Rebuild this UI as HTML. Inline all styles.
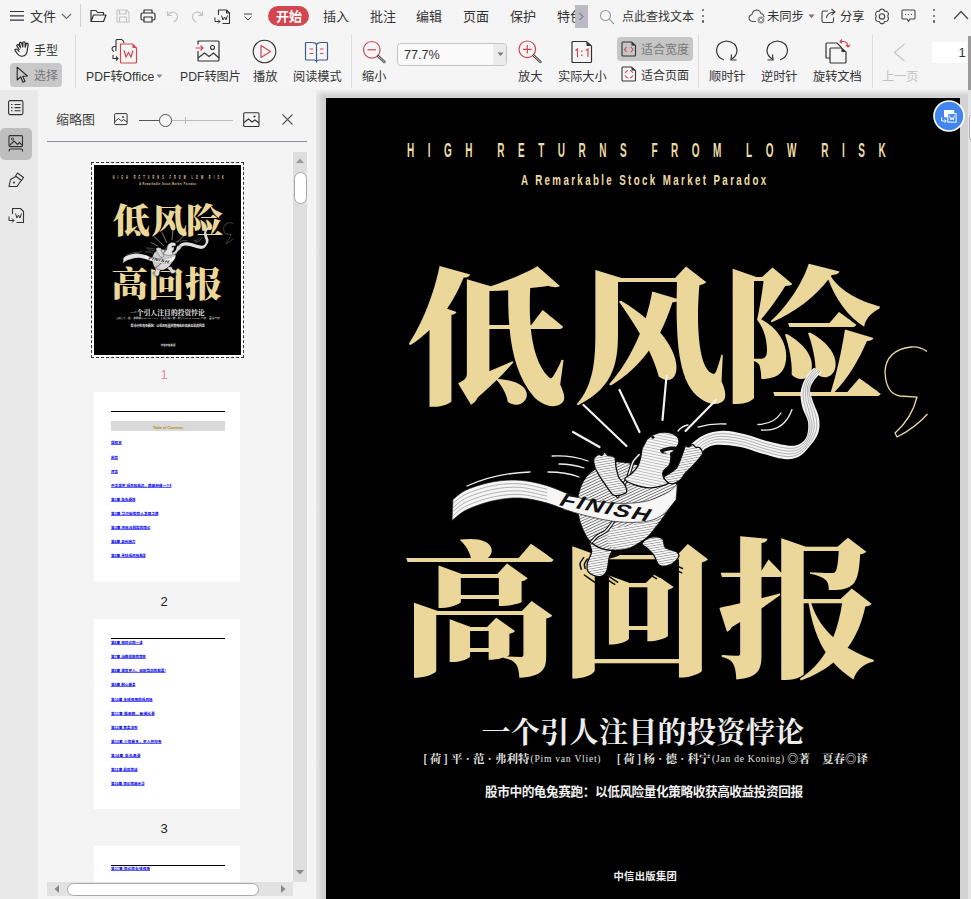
<!DOCTYPE html>
<html lang="zh-CN">
<head>
<meta charset="utf-8">
<title>WPS PDF</title>
<style>
*{box-sizing:border-box;margin:0;padding:0}
html,body{width:971px;height:899px;overflow:hidden;background:#f5f5f5;font-family:"Liberation Sans","Noto Sans CJK SC",sans-serif;color:#333}
.abs{position:absolute}
#app{position:relative;width:971px;height:899px;overflow:hidden}
/* ===== menu row ===== */
#menubar{left:0;top:0;width:971px;height:32px;background:#f5f5f5}
.mi{position:absolute;top:7px;height:20px;line-height:20px;font-size:13px;color:#333;white-space:nowrap}
/* ===== toolbar ===== */
#toolbar{left:0;top:32px;width:971px;height:58px;background:#f5f5f5}
.tl{position:absolute;font-size:12.2px;line-height:16px;color:#333;white-space:nowrap}
.vsep{position:absolute;width:1px;background:#dcdcdc}
/* ===== left strip ===== */
#strip{left:0;top:90px;width:38px;height:809px;background:#e9e9e9}
#panel{left:38px;top:90px;width:269px;height:809px;background:#f4f4f4}
#gap{left:307px;top:90px;width:9px;height:809px;background:#f4f4f4}
#doc{left:316px;top:90px;width:655px;height:809px;background:#d2d2d2;overflow:hidden}
.cream{color:#ebd79a}
#docin{left:-316px;top:-90px;width:971px;height:899px}
#page{left:326px;top:98px;width:634px;height:830px;background:#000}
.big{position:absolute;transform-origin:0 0;font-family:"Noto Serif CJK SC","Liberation Serif",serif;font-weight:900;color:#ebd79a;font-size:158px;line-height:158px;height:158px;white-space:nowrap}
.eng1{position:absolute;color:#eddca6;font-weight:700;font-family:"Liberation Sans",sans-serif;white-space:nowrap;transform-origin:0 0}
.sub{position:absolute;font-family:"Noto Serif CJK SC","Liberation Serif",serif;font-weight:700;color:#ededed;white-space:nowrap}
.a{top:750px;font-size:11.5px;line-height:16px;color:#e4e4e4}
.a i{font-style:normal;display:inline-block;width:10.5px;text-align:center}
.lat{font-family:"Liberation Serif","Noto Serif CJK SC",serif;font-weight:400;font-size:9.6px;letter-spacing:.75px;top:751px}
.sans{position:absolute;font-family:"Liberation Sans","Noto Sans CJK SC",sans-serif;font-weight:700;color:#f0f0f0;white-space:nowrap}


.dots{width:3px;height:15px}
.dots b{display:block;width:2.4px;height:2.4px;border-radius:50%;background:#5a5a5a;margin:0 0 3.2px 0}
.tn{left:76px;width:100px;text-align:center;font-size:13px;line-height:16px;color:#222}
.tp{left:56px;width:146px;background:#fff;overflow:hidden}
.tline{position:absolute;left:17px;width:114px;height:1px;background:#000}
.ttoc{position:absolute;left:17px;width:380px;text-align:center;transform-origin:0 0;transform:scale(.3);font-size:12px;line-height:16px;font-weight:700;color:#b8860b;white-space:nowrap}
.tlk{position:absolute;left:17px;transform-origin:0 0;transform:scale(.3);font-size:12px;line-height:16px;height:16px;font-weight:700;color:#0000ee;white-space:nowrap}
.tlk span{display:inline-block;overflow:hidden;text-decoration:underline;text-decoration-thickness:3.2px;text-underline-offset:1px;text-align:justify;text-align-last:justify;height:16px}
</style>
</head>
<body>
<div id="app">
<div id="menubar" class="abs">
 <svg class="abs" style="left:10px;top:10px" width="15" height="12" viewBox="0 0 15 12"><path d="M0 1.5H14M0 5.8H14M0 10.2H14" stroke="#333" stroke-width="1.2" fill="none"/></svg>
 <div class="mi" style="left:30px">文件</div>
 <svg class="abs" style="left:61px;top:13px" width="11" height="7" viewBox="0 0 11 7"><path d="M1 1L5.5 5.5L10 1" stroke="#666" stroke-width="1.1" fill="none"/></svg>
 <div class="vsep" style="left:80px;top:4px;height:23px;background:#d0d0d0"></div>
 <svg class="abs" style="left:90px;top:9px" width="17" height="14" viewBox="0 0 17 14"><path d="M1 12.5V1.5H6L7.5 3.5H13.5V6M1 12.5L3.5 6H16L13.5 12.5Z" stroke="#333" stroke-width="1.2" fill="none" stroke-linejoin="round"/></svg>
 <svg class="abs" style="left:116px;top:9px" width="14" height="14" viewBox="0 0 14 14"><path d="M1 1H10.5L13 3.5V13H1ZM3.5 1V5H10V1M3.5 13V8H10.5V13" stroke="#c2c2c2" stroke-width="1.1" fill="none" stroke-linejoin="round"/></svg>
 <svg class="abs" style="left:140px;top:9px" width="16" height="14" viewBox="0 0 16 14"><path d="M4 4V1H12V4M4 11H2.5Q1 11 1 9.5V5.5Q1 4 2.5 4H13.5Q15 4 15 5.5V9.5Q15 11 13.5 11H12M4 8H12V13H4Z" stroke="#333" stroke-width="1.2" fill="none" stroke-linejoin="round"/></svg>
 <svg class="abs" style="left:166px;top:10px" width="13" height="13" viewBox="0 0 13 13"><path d="M1.5 1.5V5.5H5.5M1.8 5.3Q4 1.8 7.5 2.2Q11.5 3 11.5 7Q11.3 10 8 12" stroke="#c2c2c2" stroke-width="1.1" fill="none" stroke-linecap="round"/></svg>
 <svg class="abs" style="left:191px;top:10px" width="13" height="13" viewBox="0 0 13 13"><path d="M11.5 1.5V5.5H7.5M11.2 5.3Q9 1.8 5.5 2.2Q1.5 3 1.5 7Q1.7 10 5 12" stroke="#c2c2c2" stroke-width="1.1" fill="none" stroke-linecap="round"/></svg>
 <svg class="abs" style="left:214px;top:9px" width="17" height="16" viewBox="0 0 17 16"><path d="M4.5 6V1H12.5L15.5 4V14.5H8.5M12.5 1V4H15.5" stroke="#333" stroke-width="1.1" fill="none" stroke-linejoin="round"/><path d="M7.5 6.5L9 11L10.5 8L12 11L13.5 6.5" stroke="#333" stroke-width="1" fill="none"/><path d="M1 8.5V12.5H6M4 10.5L6 12.5L4 14.5" stroke="#333" stroke-width="1" fill="none"/></svg>
 <svg class="abs" style="left:243px;top:13px" width="10" height="8" viewBox="0 0 10 8"><path d="M1 1H9M1.5 3.5L5 7L8.5 3.5" stroke="#444" stroke-width="1" fill="none"/></svg>
 <div class="abs" style="left:268px;top:6px;width:41px;height:20px;border-radius:10px;background:#d2464f"></div>
 <div class="mi" style="left:276px;color:#fff;font-weight:700">开始</div>
 <div class="mi" style="left:323px">插入</div>
 <div class="mi" style="left:370px">批注</div>
 <div class="mi" style="left:416px">编辑</div>
 <div class="mi" style="left:463px">页面</div>
 <div class="mi" style="left:510px">保护</div>
 <div class="mi" style="left:557px;width:18px;overflow:hidden">特色</div>
 <div class="abs" style="left:575px;top:5px;width:13px;height:23px;background:#b9bcc4"></div>
 <svg class="abs" style="left:578px;top:12px" width="7" height="9" viewBox="0 0 7 9"><path d="M1.5 1L5 4.5L1.5 8" stroke="#555" stroke-width="1" fill="none"/></svg>
 <svg class="abs" style="left:599px;top:9px" width="16" height="16" viewBox="0 0 16 16"><circle cx="6.5" cy="6.5" r="5" stroke="#999" stroke-width="1.1" fill="none"/><path d="M10.2 10.2L15 15" stroke="#999" stroke-width="1.1"/></svg>
 <div class="mi" style="left:622px;font-size:12px">点此查找文本</div>
 <div class="abs dots" style="left:702px;top:9px"><b></b><b></b><b></b></div>
 <svg class="abs" style="left:748px;top:8px" width="18" height="16" viewBox="0 0 18 16"><path d="M8 13.5H4.5Q1 13 1 9.8Q1.2 7 4 6.5Q4.5 2.5 8.5 2Q12 2.2 13 5.5Q16 6 16 9" stroke="#555" stroke-width="1.1" fill="none"/><circle cx="13" cy="12" r="3.5" fill="#9a9a9a"/><path d="M11.6 10.6L14.4 13.4M14.4 10.6L11.6 13.4" stroke="#fff" stroke-width="1"/></svg>
 <div class="mi" style="left:767px;font-size:12.3px">未同步</div>
 <svg class="abs" style="left:808px;top:14px" width="7" height="5" viewBox="0 0 7 5"><path d="M0.5 0.5H6.5L3.5 4.2Z" fill="#777"/></svg>
 <svg class="abs" style="left:821px;top:8px" width="16" height="16" viewBox="0 0 16 16"><path d="M7 3H2.5Q1 3 1 4.5V13Q1 14.5 2.5 14.5H11Q12.5 14.5 12.5 13V9.5" stroke="#444" stroke-width="1.1" fill="none"/><path d="M5.5 10Q6 4.5 13.5 4M10.5 1L14 4L10.5 7" stroke="#444" stroke-width="1.1" fill="none"/></svg>
 <div class="mi" style="left:840px;font-size:12.3px">分享</div>
 <svg class="abs" style="left:874px;top:8px" width="16" height="17" viewBox="0 0 16 17"><path d="M6.300 1.600Q8 0.700 9.700 1.600L10.600 3.100L12.900 3.400Q14.500 4.500 14.500 6.300L13.700 7.800L14.500 10.300Q14.500 12.200 12.900 13.300L10.600 13.500L9.700 15.200Q8 16.100 6.300 15.200L5.400 13.500L3.100 13.300Q1.500 12.200 1.500 10.300L2.300 8.400L1.500 6.300Q1.500 4.500 3.100 3.400L5.400 3.100Z" stroke="#444" stroke-width="1.100" fill="none" stroke-linejoin="round"/><circle cx="8" cy="8.400" r="2.700" stroke="#444" stroke-width="1.100" fill="none"/></svg>
 <svg class="abs" style="left:901px;top:9px" width="15" height="14" viewBox="0 0 15 14"><path d="M2 1H13Q14 1 14 2V9Q14 10 13 10H9L7.5 12.5L6 10H2Q1 10 1 9V2Q1 1 2 1Z" stroke="#444" stroke-width="1.1" fill="none"/><path d="M4 5.5H5M7 5.5H8M10 5.5H11" stroke="#444" stroke-width="1.2"/></svg>
 <div class="abs dots" style="left:933px;top:9px"><b></b><b></b><b></b></div>
 <svg class="abs" style="left:953px;top:10px" width="16" height="10" viewBox="0 0 16 10"><path d="M1 9L8 1.5L15 9" stroke="#444" stroke-width="1.2" fill="none"/></svg>
</div>
<div id="toolbar" class="abs">
 <!-- coordinates inside toolbar are screen coords minus 32 in y -->
 <svg class="abs" style="left:14px;top:9px" width="17" height="16" viewBox="0 0 17 16"><path d="M5.2 8.5L3.2 5.6Q2.4 4.4 3.4 3.8Q4.4 3.4 5.1 4.5L6.6 6.8L5.6 3Q5.3 1.7 6.4 1.4Q7.5 1.2 7.9 2.5L8.8 6L8.8 1.9Q8.9 0.7 10 0.7Q11.1 0.8 11.1 2L11.2 6.2L12.1 3Q12.5 1.9 13.5 2.2Q14.4 2.6 14.2 3.8L13.4 8Q13.4 11.5 11.8 13.6Q10.2 15.4 7.6 15.2Q5.2 15 3.6 13L1.3 9.9Q0.6 8.8 1.5 8.2Q2.5 7.7 3.4 8.7L5 10.4" stroke="#222" stroke-width="1.15" fill="none" stroke-linejoin="round" stroke-linecap="round"/></svg>
 <div class="tl" style="left:34px;top:10.6px;font-size:12px">手型</div>
 <div class="abs" style="left:10px;top:31px;width:52px;height:24px;border-radius:4px;background:#c9c9c9"></div>
 <svg class="abs" style="left:16px;top:34px" width="13" height="18" viewBox="0 0 13 18"><path d="M1.2 1.2V14L4.6 10.8L7 16.2L9 15.3L6.7 10.2L11.4 10Z" stroke="#222" stroke-width="1.1" fill="none" stroke-linejoin="round"/></svg>
 <div class="tl" style="left:34px;top:36px;font-size:12px;color:#777">选择</div>
 <div class="vsep" style="left:75px;top:3px;height:53px"></div>
 <!-- PDF to Office -->
 <svg class="abs" style="left:110px;top:6px" width="28" height="27" viewBox="0 0 28 27"><path d="M6 13V2.5Q6 1.5 7 1.5H11.5Q13.5 2 14 5" stroke="#333" stroke-width="1.1" fill="none"/><path d="M6 8.5H4Q2 9 2 11Q2.2 13 4 13.5M3 17V20.5H8M6 18.5L8 20.5L6 22.5" stroke="#333" stroke-width="1.1" fill="none"/><path d="M10.5 6H22.5L26.5 10V24Q26.5 25 25.5 25H11.5Q10.5 25 10.5 24Z" stroke="#d2464f" stroke-width="1.2" fill="#f5f5f5"/><path d="M22.5 6V10H26.5Z" fill="#d2464f"/><path d="M14 12.5L16 19L18.5 14.5L21 19L23 12.5" stroke="#d2464f" stroke-width="1.2" fill="none"/></svg>
 <div class="tl" style="left:86px;top:36.5px">PDF转Office</div>
 <svg class="abs" style="left:156px;top:41.5px" width="7" height="5" viewBox="0 0 7 5"><path d="M0.5 0.5H6.5L3.5 4Z" fill="#888"/></svg>
 <!-- PDF to image -->
 <svg class="abs" style="left:193px;top:7px" width="28" height="24" viewBox="0 0 28 24"><path d="M5 5.5V3Q5 2 6 2H25Q26 2 26 3V21Q26 22 25 22H6Q5 22 5 21V12" stroke="#333" stroke-width="1.2" fill="none"/><circle cx="19.5" cy="8.5" r="2" stroke="#333" stroke-width="1.1" fill="none"/><path d="M5 19L11.5 14L16 17.5L20.5 14L26 19" stroke="#333" stroke-width="1.2" fill="none"/><path d="M2.5 9H10M7.5 6.5L10 9L7.5 11.5" stroke="#d2464f" stroke-width="1.1" fill="none"/></svg>
 <div class="tl" style="left:180px;top:36.5px">PDF转图片</div>
 <!-- play -->
 <svg class="abs" style="left:252px;top:7px" width="25" height="25" viewBox="0 0 25 25"><circle cx="12.5" cy="12.5" r="11.3" stroke="#333" stroke-width="1.1" fill="none"/><path d="M9 6.5V18.5L18.5 12.5Z" stroke="#d2464f" stroke-width="1.2" fill="none" stroke-linejoin="round"/></svg>
 <div class="tl" style="left:253px;top:36.5px">播放</div>
 <!-- read mode -->
 <svg class="abs" style="left:304px;top:9px" width="25" height="22" viewBox="0 0 25 22"><path d="M12.5 3.5Q11.5 1.5 8 1.5H2.5Q1.5 1.5 1.5 2.5V18Q1.5 19 2.5 19H10Q12 19 12.5 20.5Q13 19 15 19H22.5Q23.500 19 23.500 18V2.500Q23.500 1.500 22.500 1.500H17Q13.500 1.500 12.500 3.500V20" stroke="#3d5a8a" stroke-width="1.2" fill="none"/><path d="M5.500 8H9M5.500 12.500H9M16 8H19.500M16 12.500H19.500" stroke="#e0454e" stroke-width="1.200"/></svg>
 <div class="tl" style="left:293px;top:36.5px">阅读模式</div>
 <div class="vsep" style="left:351px;top:3px;height:53px"></div>
 <!-- zoom out -->
 <svg class="abs" style="left:362px;top:8px" width="25" height="24" viewBox="0 0 25 24"><circle cx="9.800" cy="9.800" r="8.300" stroke="#d2464f" stroke-width="1.200" fill="none"/><path d="M5.500 9.800H14" stroke="#d2464f" stroke-width="1.200"/><path d="M16 16L22.500 22" stroke="#444" stroke-width="2.400" stroke-linecap="round"/><path d="M16 16L22.500 22" stroke="#f5f5f5" stroke-width="0.800" stroke-linecap="round"/></svg>
 <div class="tl" style="left:362px;top:36.5px">缩小</div>
 <div class="abs" style="left:397px;top:10.5px;width:110px;height:23px;border:1px solid #c6c6c6;border-radius:4px;background:#fafafa"></div>
 <div class="abs" style="left:493px;top:11.5px;width:13px;height:21px;background:#ebebeb;border-radius:0 3px 3px 0"></div>
 <svg class="abs" style="left:497px;top:20px" width="7" height="5" viewBox="0 0 7 5"><path d="M0.500 0.500H6.500L3.500 4Z" fill="#777"/></svg>
 <div class="tl" style="left:404px;top:15px;font-size:12.6px">77.7%</div>
 <!-- zoom in -->
 <svg class="abs" style="left:518px;top:8px" width="25" height="24" viewBox="0 0 25 24"><circle cx="9.300" cy="9.300" r="8.300" stroke="#d2464f" stroke-width="1.200" fill="none"/><path d="M5 9.300H13.600M9.300 5V13.600" stroke="#d2464f" stroke-width="1.200"/><path d="M15.500 15.500L22.500 22" stroke="#444" stroke-width="2.400" stroke-linecap="round"/><path d="M15.500 15.500L22.500 22" stroke="#f5f5f5" stroke-width="0.800" stroke-linecap="round"/></svg>
 <div class="tl" style="left:518px;top:36.5px">放大</div>
 <!-- actual size -->
 <svg class="abs" style="left:571px;top:8px" width="22" height="24" viewBox="0 0 22 24"><path d="M2 1.500H15.500L20.500 6V21.500Q20.500 22.500 19.500 22.500H2Q1 22.500 1 21.500V2.500Q1 1.500 2 1.500Z" stroke="#333" stroke-width="1.200" fill="none"/><path d="M15.500 1.500V6H20.500Z" fill="#333"/><path d="M4.500 10.500L6.500 9V17M15 10.500L17 9V17" stroke="#d2464f" stroke-width="1.200" fill="none"/><path d="M10.800 10.500V12M10.800 14.500V16" stroke="#d2464f" stroke-width="1.300"/></svg>
 <div class="tl" style="left:558px;top:36.5px">实际大小</div>
 <!-- fit width / page -->
 <div class="abs" style="left:617px;top:5px;width:76px;height:24px;border-radius:4px;background:#c6c6c6"></div>
 <svg class="abs" style="left:621px;top:9px" width="16" height="16" viewBox="0 0 16 16"><path d="M2 1H10.500L14.500 4.500V14Q14.500 15 13.500 15H2Q1 15 1 14V2Q1 1 2 1Z" stroke="#333" stroke-width="1.100" fill="none"/><path d="M10.500 1V4.500H14.500Z" fill="#333"/><path d="M5.500 6L3.500 8.500L5.500 11M10 6L12 8.500L10 11" stroke="#d2464f" stroke-width="1.100" fill="none"/></svg>
 <div class="tl" style="left:641px;top:9.500px;font-size:12px;color:#777">适合宽度</div>
 <svg class="abs" style="left:621px;top:34px" width="16" height="16" viewBox="0 0 16 16"><path d="M2 1H10.500L14.500 4.500V14Q14.500 15 13.500 15H2Q1 15 1 14V2Q1 1 2 1Z" stroke="#333" stroke-width="1.100" fill="none"/><path d="M10.500 1V4.500H14.500Z" fill="#333"/><path d="M4.200 7Q5 4.800 7 4.500M9 4.500Q11 5 11.800 7M11.800 9.500Q11 11.500 9 12M7 12Q5 11.500 4.200 9.500" stroke="#d2464f" stroke-width="1.100" fill="none"/></svg>
 <div class="tl" style="left:641px;top:35.500px;font-size:12px">适合页面</div>
 <div class="vsep" style="left:698px;top:3px;height:53px"></div>
 <!-- rotate cw -->
 <svg class="abs" style="left:714px;top:7px" width="25" height="24" viewBox="0 0 25 24"><path d="M17 20.500Q23 17 23 11.500Q22.500 3 12.500 2Q3 3 2.500 11.500Q3 18.500 10 20.800" stroke="#333" stroke-width="1.200" fill="none"/><path d="M17.500 15.500L17 20.800L22.500 21" stroke="#333" stroke-width="1.200" fill="none"/></svg>
 <div class="tl" style="left:709px;top:36.500px">顺时针</div>
 <svg class="abs" style="left:765px;top:7px" width="25" height="24" viewBox="0 0 25 24"><path d="M8 20.500Q2 17 2 11.500Q2.500 3 12.500 2Q22 3 22.500 11.500Q22 18.500 15 20.800" stroke="#333" stroke-width="1.200" fill="none"/><path d="M7.500 15.500L8 20.800L2.500 21" stroke="#333" stroke-width="1.200" fill="none"/></svg>
 <div class="tl" style="left:761px;top:36.500px">逆时针</div>
 <!-- rotate doc -->
 <svg class="abs" style="left:824px;top:6px" width="28" height="27" viewBox="0 0 28 27"><path d="M3 5H13L17 9V19Q17 20 16 20H3Q2 20 2 19V6Q2 5 3 5Z" stroke="#333" stroke-width="1.200" fill="#f5f5f5"/><path d="M7 10H17.500L22 14V24Q22 25 21 25H7Q6 25 6 24V11Q6 10 7 10Z" stroke="#333" stroke-width="1.200" fill="#f5f5f5"/><path d="M17.500 10V14H22Z" fill="#333"/><path d="M16 3.500H19.500Q24 4 24 9M18 1.500L16 3.500L18 5.500M22 7L24 9L26 7" stroke="#d2464f" stroke-width="1.100" fill="none"/></svg>
 <div class="tl" style="left:813px;top:36.500px">旋转文档</div>
 <div class="vsep" style="left:872px;top:3px;height:53px"></div>
 <svg class="abs" style="left:893px;top:11px" width="13" height="19" viewBox="0 0 13 19"><path d="M11.500 1L1.500 9.500L11.500 18" stroke="#c6c6c6" stroke-width="1.300" fill="none"/></svg>
 <div class="tl" style="left:882px;top:36.500px;color:#c2c2c2">上一页</div>
 <div class="abs" style="left:932px;top:10px;width:35px;height:21px;background:#fff"></div>
 <div class="tl" style="left:958.500px;top:13px;font-size:13px">1</div>
 <div class="abs" style="left:968px;top:4px;width:3px;height:54px;background:#9b9b9b"></div>
</div>
<div id="strip" class="abs">
 <svg class="abs" style="left:8px;top:10px" width="16" height="16" viewBox="0 0 16 16"><rect x="0.600" y="0.600" width="14.300" height="14" rx="1.500" stroke="#333" stroke-width="1.100" fill="none"/><path d="M3 4.500H4.500M6.500 4.500H12.500M3 7.600H4.500M6.500 7.600H12.500M3 10.700H4.500M6.500 10.700H12.500" stroke="#333" stroke-width="1.100"/></svg>
 <div class="abs" style="left:0;top:38px;width:32px;height:32px;border-radius:5px;background:#bebebe"></div>
 <svg class="abs" style="left:8px;top:45px" width="16" height="18" viewBox="0 0 16 18"><rect x="1" y="0.600" width="13.500" height="11" rx="1" stroke="#333" stroke-width="1.100" fill="none"/><circle cx="4.500" cy="4" r="1.100" stroke="#333" stroke-width="0.900" fill="none"/><path d="M1.500 10.500L6 6L9.500 9.500L11.500 7.500L14.500 10.500" stroke="#333" stroke-width="1.100" fill="none"/><path d="M1.200 16.500V15Q1.200 14 2.200 14H13.500Q14.500 14 14.500 15V16.500" stroke="#333" stroke-width="1.100" fill="none"/></svg>
 <svg class="abs" style="left:8px;top:82px" width="17" height="16" viewBox="0 0 17 16"><path d="M9.500 1L15.500 5.500L13.500 8.500L7.500 4ZM7.800 4.500L2.500 7.500L1 14.500L9 14.500L13 8.800" stroke="#333" stroke-width="1.100" fill="none" stroke-linejoin="round"/><circle cx="6" cy="10.500" r="1" fill="#333"/></svg>
 <svg class="abs" style="left:8px;top:117px" width="17" height="17" viewBox="0 0 17 17"><path d="M4.500 7V1.500H12.500L15.500 4.500V15.500H8.500" stroke="#333" stroke-width="1.100" fill="none" stroke-linejoin="round"/><path d="M7.500 6.500L9 11L10.500 8L12 11L13.500 6.500" stroke="#333" stroke-width="1" fill="none"/><path d="M1 9.500V13.500H6M4 11.500L6 13.500L4 15.500" stroke="#333" stroke-width="1" fill="none"/></svg>
</div>
<div id="panel" class="abs">
 <div class="abs" style="left:18px;top:21px;font-size:13px;line-height:18px;color:#444;white-space:nowrap">缩略图</div>
 <svg class="abs" style="left:76px;top:23px" width="14" height="13" viewBox="0 0 14 13"><rect x="0.600" y="0.600" width="12.500" height="11" rx="1" stroke="#333" stroke-width="1" fill="none"/><circle cx="9" cy="4" r="0.900" fill="#333"/><path d="M1 8.500L4.500 5.500L7.500 8L9.500 6.500L13 9" stroke="#333" stroke-width="1" fill="none"/></svg>
 <div class="abs" style="left:101px;top:30px;width:26px;height:1px;background:#555"></div>
 <div class="abs" style="left:127px;top:30px;width:68px;height:1px;background:#bcbcbc"></div>
 <div class="abs" style="left:147px;top:27px;width:1px;height:7px;background:#bcbcbc"></div>
 <div class="abs" style="left:121px;top:24px;width:12.500px;height:12.500px;border-radius:50%;border:1px solid #555;background:#f4f4f4"></div>
 <svg class="abs" style="left:205px;top:22px" width="17" height="16" viewBox="0 0 17 16"><rect x="0.700" y="0.700" width="15.300" height="13.800" rx="1" stroke="#333" stroke-width="1.100" fill="none"/><circle cx="11.500" cy="4.500" r="1.100" fill="#333"/><path d="M1 10.500L5.500 7L9 10L12 8L16 11" stroke="#333" stroke-width="1.100" fill="none"/></svg>
 <svg class="abs" style="left:244px;top:24px" width="11" height="11" viewBox="0 0 11 11"><path d="M0.500 0.500L10.500 10.500M10.500 0.500L0.500 10.500" stroke="#555" stroke-width="1.100"/></svg>
 <div class="abs" style="left:9px;top:51px;width:260px;height:1px;background:#8c8c98"></div>
 <!-- v scrollbar -->
 <div class="abs" style="left:255px;top:62px;width:14px;height:730px;background:#dedede"></div>
 <svg class="abs" style="left:258px;top:68px" width="8" height="5" viewBox="0 0 8 5"><path d="M0 5L4 0.500L8 5Z" fill="#9a9a9a"/></svg>
 <div class="abs" style="left:255.500px;top:82px;width:13.500px;height:32px;border-radius:7px;border:1px solid #a8a8a8;background:#fff"></div>
 <svg class="abs" style="left:258px;top:780px" width="8" height="5" viewBox="0 0 8 5"><path d="M0 0L4 4.500L8 0Z" fill="#8a8a8a"/></svg>
 <!-- h scrollbar -->
 <div class="abs" style="left:9px;top:792px;width:246px;height:14px;background:#e2e2e2"></div>
 <svg class="abs" style="left:16px;top:795px" width="5" height="8" viewBox="0 0 5 8"><path d="M5 0L0.500 4L5 8Z" fill="#8a8a8a"/></svg>
 <svg class="abs" style="left:243px;top:795px" width="5" height="8" viewBox="0 0 5 8"><path d="M0 0L4.500 4L0 8Z" fill="#8a8a8a"/></svg>
 <div class="abs" style="left:29px;top:792.500px;width:192px;height:13px;border-radius:7px;border:1px solid #a8a8a8;background:#fff"></div>

 <div class="abs" style="left:53px;top:72px;width:153px;height:196px;border:1px dashed #333;background:#fff"></div>
 <div class="abs" id="thumb1" style="left:56px;top:75px;width:147px;height:190px;background:#000;overflow:hidden"><!--T1S--><div class="abs" style="left:0;top:0;width:634px;height:819px;transform-origin:0 0;transform:scale(.2319)"><div class="abs" style="left:-326px;top:-98px;width:971px;height:1000px">
  <div class="eng1" style="left:407px;top:139px;font-size:20px;line-height:23px;letter-spacing:27px;word-spacing:-10px;transform:scaleX(.5)">HIGH RETURNS FROM LOW RISK</div>
  <div class="eng1" style="left:521px;top:171px;font-size:15px;line-height:17px;letter-spacing:3.65px;transform:scaleX(.65)">A Remarkable Stock Market Paradox</div>
  <div class="abs" style="left:0;top:0"><span class="big" style="left:408.4px;top:255.0px;transform:scale(1.010,0.929)">低</span><span class="big" style="left:572.9px;top:257.0px;transform:scale(0.985,0.912)">风</span><span class="big" style="left:721.7px;top:254.8px;transform:scale(1.028,0.921)">险</span></div>
  <div class="abs" style="left:0;top:0"><span class="big" style="left:400.7px;top:528.9px;transform:scale(0.991,0.921)">高</span><span class="big" style="left:558.3px;top:529.1px;transform:scale(0.998,0.930)">回</span><span class="big" style="left:717.3px;top:525.6px;transform:scale(1.020,0.947)">报</span></div>
  <svg class="abs" style="left:326px;top:98px" width="634" height="801" viewBox="326 98 634 801">
   <defs>
    <pattern width="2.600" height="2.600" patternUnits="userSpaceOnUse" patternTransform="rotate(-25)"><rect width="2.600" height="2.600" fill="#f7f7f7"/><rect width="2.600" height="0.620" fill="#3c3c3c"/></pattern>
    <pattern width="2.400" height="2.400" patternUnits="userSpaceOnUse" patternTransform="rotate(-10)"><rect width="2.400" height="2.400" fill="#f9f9f9"/><rect width="2.400" height="0.450" fill="#555"/></pattern>
    <pattern width="2.800" height="2.800" patternUnits="userSpaceOnUse" patternTransform="rotate(12)"><rect width="2.800" height="2.800" fill="#fafafa"/><rect width="2.800" height="0.420" fill="#666"/></pattern>
   </defs>
   <g stroke="#f2f2f2" stroke-width="2.200" stroke-linecap="round" fill="none">
    <path d="M583.500 405L626.500 446"/><path d="M619.500 390L639.500 432"/><path d="M666.500 376L662.500 420"/><path d="M716 400L685.500 431"/>
    <path d="M573 432L599.500 447"/>
   </g>
   <g stroke="#eeeeee" stroke-width="1.300" stroke-linecap="round" fill="none">
    <path d="M552 456Q572 455 588 461"/><path d="M559 464Q572 464 584 468"/><path d="M548 472Q566 472 579 477"/>
    <path d="M467 486Q496 473 530 472"/>
    <path d="M758 424.500Q774 424 781 413"/><path d="M761.500 430Q784 432 792 409.500"/>
    <path d="M678 431Q682 426 688 425"/><path d="M698 427Q712 423 726 424"/>
   </g>
   <path d="M691.1 443.8C693.3 442.3 698.8 437.1 704.1 434.9C709.4 432.8 715.8 431.0 722.6 430.8C729.4 430.7 737.2 432.4 744.9 434.2C752.6 436.0 761.6 439.7 769.0 441.6C776.4 443.5 784.1 445.4 789.4 445.7C794.6 446.0 797.6 445.1 800.5 443.4C803.4 441.7 805.8 439.1 807.0 435.5C808.2 431.8 808.6 426.1 807.9 421.6C807.2 417.1 804.0 413.2 802.7 408.6C801.5 404.0 800.3 398.3 800.5 393.8C800.7 389.2 802.3 384.8 803.8 381.2C805.4 377.5 808.1 374.1 809.8 371.9C811.4 369.7 813.2 368.5 813.9 367.8L822.0 371.5C820.7 373.1 815.8 377.7 813.9 380.8C811.9 383.9 810.2 386.3 810.1 390.1C810.1 393.8 812.0 398.4 813.5 403.0C815.0 407.7 818.2 412.9 819.0 417.9C819.8 422.8 819.8 428.1 818.3 432.7C816.8 437.3 813.4 441.7 810.1 445.7C806.9 449.7 803.0 454.6 798.7 456.8C794.3 459.0 790.0 459.6 783.8 459.0C777.6 458.5 769.0 455.5 761.6 453.5C754.2 451.4 746.7 448.2 739.3 446.8C731.9 445.3 722.8 444.4 717.1 444.7C711.4 445.1 707.8 447.2 705.0 449.0C702.2 450.9 701.2 454.7 700.4 455.9Z" fill="#f4f4f4"/>
   <g stroke="#8c8c8c" stroke-width="0.650" fill="none">
    <path d="M693.0 446.2C694.9 444.8 699.5 439.8 704.3 437.7C709.0 435.6 714.9 433.8 721.5 433.6C728.1 433.4 736.1 435.0 743.8 436.7C751.4 438.4 760.1 442.0 767.5 444.0C774.9 445.9 782.8 448.0 788.3 448.3C793.7 448.7 796.9 447.9 800.1 446.1C803.4 444.3 806.0 441.2 807.6 437.5C809.3 433.8 810.3 428.3 810.0 423.8C809.7 419.3 807.1 415.1 806.0 410.4C804.8 405.8 803.2 400.2 803.1 395.6C803.0 391.0 803.9 386.6 805.1 382.9C806.4 379.3 808.9 376.1 810.6 373.7C812.3 371.3 814.7 369.4 815.5 368.6"/>
    <path d="M694.8 448.6C696.4 447.3 700.2 442.6 704.5 440.6C708.7 438.5 714.1 436.6 720.4 436.4C726.8 436.2 735.1 437.6 742.7 439.2C750.3 440.9 758.6 444.4 766.0 446.3C773.4 448.3 781.5 450.6 787.2 451.0C792.8 451.4 796.2 450.7 799.8 448.8C803.3 446.9 806.2 443.3 808.3 439.6C810.3 435.8 811.9 430.6 812.1 426.0C812.2 421.5 810.3 417.1 809.3 412.3C808.2 407.5 806.2 402.1 805.7 397.5C805.2 392.9 805.4 388.4 806.4 384.7C807.3 381.0 809.6 378.0 811.4 375.4C813.2 372.9 816.2 370.3 817.1 369.3"/>
    <path d="M696.7 451.0C698.0 449.8 700.9 445.4 704.7 443.4C708.4 441.4 713.2 439.5 719.3 439.2C725.5 438.9 734.0 440.2 741.5 441.7C749.1 443.3 757.1 446.7 764.5 448.7C772.0 450.7 780.2 453.2 786.0 453.7C791.9 454.1 795.6 453.5 799.4 451.5C803.2 449.4 806.4 445.5 808.9 441.6C811.3 437.7 813.5 432.8 814.1 428.2C814.8 423.7 813.5 419.0 812.5 414.2C811.5 409.3 809.1 403.9 808.3 399.3C807.5 394.7 807.0 390.2 807.6 386.5C808.3 382.8 810.4 380.0 812.2 377.2C814.1 374.5 817.7 371.2 818.7 370.0"/>
    <path d="M698.5 453.5C699.6 452.2 701.6 448.1 704.8 446.2C708.1 444.3 712.3 442.3 718.2 442.0C724.1 441.6 733.0 442.7 740.4 444.3C747.9 445.8 755.6 449.1 763.1 451.1C770.5 453.1 778.9 455.8 784.9 456.4C790.9 456.9 794.9 456.2 799.0 454.1C803.1 452.0 806.6 447.6 809.5 443.6C812.4 439.7 815.2 435.1 816.2 430.5C817.3 425.9 816.7 420.9 815.8 416.0C814.9 411.1 812.0 405.8 810.9 401.2C809.7 396.6 808.5 392.0 808.9 388.3C809.2 384.6 811.1 381.9 813.0 379.0C815.0 376.1 819.2 372.1 820.4 370.8"/>
   </g>
   <g stroke="#0a0a0a" stroke-width="1.500" stroke-linecap="round" fill="none">
    <path d="M583.7 557.7C583.1 558.6 580.5 561.5 580.1 563.4C579.7 565.4 581.1 568.2 581.2 569.2"/>
    <path d="M587.3 559.1C586.8 560.0 584.8 562.6 584.4 564.2C584.1 565.7 585.0 567.8 585.1 568.5"/>
    <path d="M584.4 575.0C586.1 576.2 592.8 581.0 594.5 582.2"/>
    <path d="M604.6 577.9C606.3 578.9 613.0 583.3 614.7 584.3"/>
    <path d="M608.9 576.4C610.4 577.4 616.1 581.2 617.6 582.2"/>
    <path d="M647.9 573.5C649.3 574.4 655.1 577.7 656.5 578.6"/>
    <path d="M650.7 572.1C652.3 572.9 658.5 576.3 660.1 577.1"/>
    <path d="M676.7 565.6C677.7 566.1 681.5 568.0 682.5 568.5"/>
    <path d="M676.0 569.9C676.9 570.4 680.8 572.3 681.7 572.8"/>
   </g>
   <path d="M606.8 543.3C610.4 541.3 620.3 546.1 627.7 546.1C635.0 546.1 645.0 542.8 650.7 543.3C656.5 543.7 661.1 546.7 662.3 549.0C663.5 551.3 659.9 556.2 657.9 556.9C656.0 557.7 655.8 554.3 650.7 553.6C645.7 553.0 633.9 552.4 627.7 553.1C621.4 553.7 616.9 556.9 613.3 557.7C609.6 558.4 607.1 560.1 606.0 557.7C605.0 555.3 603.2 545.2 606.8 543.3Z" fill="#0a0a0a"/>
   <path d="M590.2 540.4C587.8 543.0 592.1 548.1 591.6 551.9C591.1 555.7 587.8 560.1 587.3 563.4C586.8 566.8 586.5 569.9 588.5 572.1C590.4 574.3 595.9 576.7 598.8 576.7C601.8 576.7 604.6 575.3 606.3 572.1C608.1 568.9 608.3 561.5 609.2 557.7C610.2 553.8 612.6 552.6 612.1 549.0C611.6 545.4 609.7 537.5 606.0 536.0C602.4 534.6 592.6 537.7 590.2 540.4Z" fill="url(#hat2)" stroke="#0c0c0c" stroke-width="1.300"/>
   <path d="M642.1 543.3C642.6 541.3 647.4 538.0 650.7 537.2C654.1 536.4 659.8 536.9 662.3 538.6C664.7 540.4 663.0 545.4 665.4 547.6C667.9 549.8 674.9 550.2 677.0 551.9C679.1 553.6 679.4 555.7 678.1 558.0C676.9 560.2 672.6 564.0 669.5 565.2C666.4 566.4 662.0 566.9 659.4 565.2C656.7 563.4 655.5 557.5 653.6 554.8C651.7 552.1 649.8 550.9 647.9 549.0C645.9 547.1 641.6 545.2 642.1 543.3Z" fill="url(#hat2)" stroke="#0c0c0c" stroke-width="1.300"/>
   <path d="M580.1 487.8C581.5 483.8 583.2 480.2 585.9 476.9C588.5 473.7 591.4 470.8 596.0 468.3C600.5 465.8 607.2 462.7 613.3 461.8C619.3 461.0 625.7 462.1 632.0 463.3C638.2 464.5 644.7 466.6 650.7 469.0C656.7 471.4 663.6 475.0 668.0 477.7C672.5 480.3 676.1 481.6 677.4 484.9C678.7 488.1 677.3 493.2 676.0 497.1C674.6 501.1 672.2 504.3 669.5 508.7C666.7 513.0 663.0 518.5 659.4 523.1C655.8 527.6 653.1 531.8 647.9 536.0C642.6 540.2 634.6 546.0 627.7 548.3C620.7 550.6 612.3 550.8 606.0 549.7C599.8 548.7 594.1 545.3 590.2 541.8C586.2 538.3 584.3 533.4 582.3 528.8C580.2 524.3 578.8 519.1 577.9 514.4C577.1 509.7 576.8 505.2 577.2 500.7C577.6 496.3 578.7 491.7 580.1 487.8Z" fill="url(#hat)" stroke="#0c0c0c" stroke-width="1.500"/>
   <path d="M613.3 527.4C617.1 525.5 624.3 528.1 630.6 526.0C636.8 523.8 646.4 515.1 650.7 514.4C655.1 513.7 657.0 518.0 656.5 521.6C656.0 525.2 652.7 531.6 647.9 536.0C643.0 540.5 633.7 546.4 627.7 548.3C621.7 550.2 615.2 549.4 611.8 547.6C608.4 545.8 607.2 540.8 607.5 537.5C607.7 534.1 609.4 529.3 613.3 527.4Z" fill="url(#hat2)"/>
   <path d="M639.2 454.6C638.2 455.7 634.9 458.7 633.4 461.1C632.0 463.5 631.5 466.3 630.6 469.0C629.6 471.8 629.1 474.5 627.7 477.7C626.2 480.8 623.6 484.6 621.9 487.8C620.2 490.9 618.3 495.0 617.6 496.4" stroke="#0c0c0c" stroke-width="3.600" fill="none" stroke-linecap="round"/>
   <path d="M639.2 454.6C638.2 455.7 634.9 458.7 633.4 461.1C632.0 463.5 631.5 466.3 630.6 469.0C629.6 471.8 629.1 474.5 627.7 477.7C626.2 480.8 623.6 484.6 621.9 487.8C620.2 490.9 618.3 495.0 617.6 496.4" stroke="#f4f4f4" stroke-width="1.500" fill="none" stroke-linecap="round"/>
   <path d="M613.3 521.6C612.1 523.2 608.7 528.6 606.0 531.0C603.4 533.4 599.8 534.2 597.4 536.0C595.0 537.8 592.6 540.8 591.6 541.8" stroke="#0c0c0c" stroke-width="3.600" fill="none" stroke-linecap="round"/>
   <path d="M613.3 521.6C612.1 523.2 608.7 528.6 606.0 531.0C603.4 533.4 599.8 534.2 597.4 536.0C595.0 537.8 592.6 540.8 591.6 541.8" stroke="#f4f4f4" stroke-width="1.500" fill="none" stroke-linecap="round"/>
   <path d="M624.8 479.1C624.3 477.2 629.8 475.5 632.0 473.3C634.2 471.2 636.3 468.8 637.8 466.1C639.2 463.5 639.9 460.4 640.6 457.5C641.4 454.6 641.4 451.2 642.1 448.8C642.8 446.4 644.0 444.8 645.0 443.1C645.9 441.3 645.9 440.1 647.9 438.5C649.8 436.8 653.1 434.3 656.5 433.3C659.9 432.2 664.7 431.8 668.0 432.3C671.4 432.7 674.9 434.3 676.7 435.9C678.5 437.4 678.9 439.8 679.0 441.6C679.0 443.5 678.3 445.3 677.0 446.8C675.6 448.4 671.9 449.2 670.9 451.0C669.9 452.8 671.2 455.2 670.9 457.5C670.7 459.8 670.8 462.3 669.5 464.7C668.2 467.1 664.0 469.7 663.0 471.9C662.0 474.1 662.9 475.7 663.7 477.7C664.6 479.6 670.2 481.8 668.0 483.4C665.9 485.1 656.3 487.5 650.7 487.8C645.2 488.0 639.2 486.3 634.9 484.9C630.6 483.4 625.3 481.0 624.8 479.1Z" fill="url(#hat3)" stroke="#0c0c0c" stroke-width="1.300"/>
   <path d="M660.5 449.6C661.8 448.5 666.7 447.1 669.5 446.7C672.2 446.3 676.3 446.4 677.0 447.1C677.7 447.8 675.5 449.9 673.8 451.0C672.1 452.1 668.6 453.1 666.6 453.4C664.6 453.8 662.7 453.5 661.7 452.9C660.7 452.2 659.2 450.6 660.5 449.6Z" fill="#111"/>
   <path d="M663.7 452.0C664.2 451.5 669.3 450.5 670.9 450.3C672.5 450.1 673.7 450.4 673.2 450.9C672.7 451.3 669.6 453.0 668.0 453.2C666.5 453.4 663.2 452.5 663.7 452.0Z" fill="#f4f4f4"/>
   <circle cx="652.9" cy="437.3" r="1.500" fill="#111"/>
   <path d="M593.8 458.6C594.1 457.0 595.4 456.8 596.2 456.0C597.1 455.3 597.9 454.1 598.8 454.0C599.8 453.9 601.0 455.8 602.0 455.5C603.0 455.1 603.6 452.0 604.6 452.0C605.6 452.0 606.6 454.8 607.8 455.5C609.0 456.1 610.6 455.7 611.8 456.0C613.0 456.4 614.3 455.9 615.0 457.8C615.7 459.7 615.5 464.3 616.1 467.6C616.8 470.9 617.6 474.8 619.0 477.7C620.5 480.6 623.5 482.5 624.8 484.9C626.0 487.3 627.5 490.4 626.5 492.1C625.6 493.8 621.2 494.8 619.0 495.3C616.8 495.7 615.2 496.2 613.3 495.0C611.3 493.7 609.9 491.1 607.5 487.8C605.1 484.4 601.0 478.4 598.8 474.8C596.7 471.2 595.4 468.8 594.5 466.1C593.7 463.4 593.5 460.3 593.8 458.6Z" fill="url(#hat2)" stroke="#0c0c0c" stroke-width="1.300"/>
   <path d="M684.2 448.8C684.9 446.9 684.5 446.3 685.3 446.0C686.2 445.6 687.9 447.1 689.1 446.8C690.3 446.6 691.4 444.4 692.5 444.5C693.7 444.6 694.5 446.9 695.7 447.4C696.9 447.9 698.6 446.7 699.8 447.7C700.9 448.7 702.6 451.8 702.6 453.4C702.6 455.1 701.4 455.7 699.8 457.8C698.1 459.9 695.0 463.5 692.5 466.1C690.1 468.7 687.5 470.9 685.3 473.3C683.2 475.7 682.0 478.8 679.6 480.6C677.2 482.3 673.6 484.2 670.9 483.7C668.3 483.2 664.0 479.4 663.7 477.7C663.5 475.9 667.3 475.0 669.5 473.3C671.6 471.7 674.8 470.2 676.7 467.6C678.6 465.0 679.8 460.9 681.0 457.8C682.3 454.7 683.5 450.8 684.2 448.8Z" fill="url(#hat2)" stroke="#0c0c0c" stroke-width="1.300"/>
   <path d="M452.9 499.6C455.2 497.9 460.0 492.7 466.8 489.7C473.6 486.7 484.6 483.2 493.5 481.7C502.5 480.1 511.4 479.7 520.3 480.3C529.2 481.0 537.3 482.8 547.1 485.7C556.9 488.6 568.5 494.8 579.2 497.7C589.9 500.6 600.6 502.4 611.4 503.1C622.1 503.7 634.1 503.5 643.5 501.7C652.9 500.0 662.0 495.3 667.6 492.4C673.2 489.4 675.6 485.5 677.2 484.1L676.1 499.6C673.8 502.2 667.7 511.4 662.2 515.1C656.8 518.8 652.0 520.8 643.5 521.8C635.0 522.8 623.0 522.6 611.4 521.0C599.8 519.5 584.6 515.4 573.9 512.4C563.2 509.5 556.0 505.5 547.1 503.1C538.2 500.7 529.2 498.4 520.3 498.0C511.4 497.6 502.5 498.7 493.5 500.7C484.6 502.6 473.7 506.5 466.8 509.8C459.9 513.1 454.5 518.7 452.0 520.5Z" fill="#f6f6f6" stroke="#1a1a1a" stroke-width="0.700"/>
   <g stroke="#8c8c8c" stroke-width="0.650" fill="none">
    <path d="M452.7 503.8C455.0 502.1 460.0 496.8 466.8 493.7C473.6 490.7 484.6 487.1 493.5 485.5C502.5 483.8 511.4 483.2 520.3 483.9C529.2 484.5 542.6 488.3 547.1 489.2"/>
    <path d="M452.5 508.0C454.9 506.2 459.9 500.8 466.8 497.7C473.6 494.6 484.6 491.0 493.5 489.3C502.5 487.5 511.4 486.8 520.3 487.4C529.2 488.0 542.6 491.8 547.1 492.6"/>
    <path d="M452.4 512.1C454.8 510.4 459.9 504.9 466.8 501.7C473.6 498.6 484.6 494.9 493.5 493.1C502.5 491.3 511.4 490.4 520.3 490.9C529.2 491.4 542.6 495.3 547.1 496.1"/>
    <path d="M452.2 516.3C454.6 514.5 459.9 509.0 466.8 505.8C473.7 502.5 484.6 498.8 493.5 496.9C502.5 495.0 511.4 494.0 520.3 494.5C529.2 494.9 542.6 498.7 547.1 499.6"/>
   </g>
   <text x="0" y="0" transform="translate(557.500 505) rotate(10.500) skewX(-22) scale(1.320 1)" font-family="Liberation Sans, sans-serif" font-weight="700" font-size="18.500" letter-spacing="1.600" fill="#111">FINISH</text>
   <path d="M927 351.500Q920 346 911 347Q886 350 885 372Q886 394 900 396L917 397Q912 418 895 433L897 437Q915 428 927.500 414" fill="none" stroke="#ead89e" stroke-width="1.300"/>
  </svg>
  <div class="sub" style="left:481.5px;top:713px;font-size:29px;line-height:36px;letter-spacing:.35px">一个引人注目的投资悖论</div>
  <div class="sub a" style="left:423px;letter-spacing:2.5px">[荷]</div>
  <div class="sub a" style="left:451px">平<i>·</i>范<i>·</i>弗利特</div>
  <div class="sub a lat" style="left:530.5px">(Pim van Vliet)</div>
  <div class="sub a" style="left:616.5px;letter-spacing:2.5px">[荷]</div>
  <div class="sub a" style="left:643.5px">杨<i>·</i>德<i>·</i>科宁</div>
  <div class="sub a lat" style="left:712px">(Jan de Koning)</div>
  <div class="sub a" style="left:787px">◎著</div>
  <div class="sub a" style="left:822px">夏春◎译</div>
  <div class="sans" style="left:485px;top:784px;font-size:12.7px;line-height:17px;letter-spacing:-.47px">股市中的龟兔赛跑：以低风险量化策略收获高收益投资回报</div>
  <div class="sans" style="left:613.5px;top:870px;font-size:10.3px;line-height:14px;letter-spacing:.3px">中信出版集团</div>
</div></div><!--T1E--></div>
 <div class="abs tn" style="top:277px;color:#e58aa6">1</div>
 <div class="abs tp" style="top:302px;height:190px"><div class="tline" style="top:19px"></div><div class="abs" style="left:17px;top:28.500px;width:114px;height:10px;background:#d9d9d9"></div><div class="ttoc" style="top:33px">Table of Contents</div>
  <div class="tlk" style="top:48.0px"><span style="width:36px">版权页</span></div>
  <div class="tlk" style="top:63.0px"><span style="width:23px">前言</span></div>
  <div class="tlk" style="top:76.8px"><span style="width:23px">序言</span></div>
  <div class="tlk" style="top:90.8px"><span style="width:201px">中文版序 低风险投资，稳健获得一个惊奇</span></div>
  <div class="tlk" style="top:104.9px"><span style="width:82px">第1章 龟兔赛跑</span></div>
  <div class="tlk" style="top:118.9px"><span style="width:159px">第2章 华尔街的惊人发现之旅</span></div>
  <div class="tlk" style="top:133.0px"><span style="width:132px">第3章 风险与回报的悖论</span></div>
  <div class="tlk" style="top:147.0px"><span style="width:82px">第4章 复利魔力</span></div>
  <div class="tlk" style="top:160.8px"><span style="width:115px">第5章 寻找低风险股票</span></div>
 </div>
 <div class="abs tn" style="top:504px">2</div>
 <div class="abs tp" style="top:529px;height:190px"><div class="tline" style="top:19px"></div>
  <div class="tlk" style="top:20.9px"><span style="width:105px">第6章 相对论的一课</span></div>
  <div class="tlk" style="top:35.0px"><span style="width:115px">第7章 战胜指数的策略</span></div>
  <div class="tlk" style="top:49.0px"><span style="width:182px">第8章 便宜买入、动能强劲的股票？</span></div>
  <div class="tlk" style="top:63.1px"><span style="width:82px">第9章 耐心是金</span></div>
  <div class="tlk" style="top:77.8px"><span style="width:139px">第10章 全球视角的低风险</span></div>
  <div class="tlk" style="top:92.2px"><span style="width:146px">第11章 慢而稳，赢得比赛</span></div>
  <div class="tlk" style="top:106.3px"><span style="width:89px">第12章 黄金法则</span></div>
  <div class="tlk" style="top:120.4px"><span style="width:169px">第13章 少即是多，买入并持有</span></div>
  <div class="tlk" style="top:134.1px"><span style="width:99px">第14章 龟兔再赛</span></div>
  <div class="tlk" style="top:148.1px"><span style="width:89px">第15章 最后的话</span></div>
  <div class="tlk" style="top:162.2px"><span style="width:112px">第16章 悖论的启示录</span></div>
 </div>
 <div class="abs tn" style="top:731px">3</div>
 <div class="abs tp" style="top:756px;height:36px;overflow:hidden"><div class="tline" style="top:19px"></div>
  <div class="tlk" style="top:20.4px"><span style="width:130px">第17章 悖论的全球视角</span></div>
 </div>
</div>
<div id="gap" class="abs"></div>
<div id="doc" class="abs">
 <div id="docin" class="abs">
  <div id="page" class="abs"></div>
  <div class="eng1" id="e1" style="left:407px;top:139px;font-size:20px;line-height:23px;letter-spacing:27px;word-spacing:-10px;transform:scaleX(.5)">HIGH RETURNS FROM LOW RISK</div>
  <div class="eng1" id="e2" style="left:521px;top:171px;font-size:15px;line-height:17px;letter-spacing:3.65px;transform:scaleX(.65)">A Remarkable Stock Market Paradox</div>
  <div class="abs" style="left:0;top:0"><span class="big" style="left:408.4px;top:255.0px;transform:scale(1.010,0.929)">低</span><span class="big" style="left:572.9px;top:257.0px;transform:scale(0.985,0.912)">风</span><span class="big" style="left:721.7px;top:254.8px;transform:scale(1.028,0.921)">险</span></div>
  <div class="abs" style="left:0;top:0"><span class="big" style="left:400.7px;top:528.9px;transform:scale(0.991,0.921)">高</span><span class="big" style="left:558.3px;top:529.1px;transform:scale(0.998,0.930)">回</span><span class="big" style="left:717.3px;top:525.6px;transform:scale(1.020,0.947)">报</span></div>
  <svg class="abs" id="illus" style="left:326px;top:98px" width="634" height="801" viewBox="326 98 634 801">
   <defs>
    <pattern id="hat" width="2.600" height="2.600" patternUnits="userSpaceOnUse" patternTransform="rotate(-25)"><rect width="2.600" height="2.600" fill="#f7f7f7"/><rect width="2.600" height="0.620" fill="#3c3c3c"/></pattern>
    <pattern id="hat2" width="2.400" height="2.400" patternUnits="userSpaceOnUse" patternTransform="rotate(-10)"><rect width="2.400" height="2.400" fill="#f9f9f9"/><rect width="2.400" height="0.450" fill="#555"/></pattern>
    <pattern id="hat3" width="2.800" height="2.800" patternUnits="userSpaceOnUse" patternTransform="rotate(12)"><rect width="2.800" height="2.800" fill="#fafafa"/><rect width="2.800" height="0.420" fill="#666"/></pattern>
   </defs>
   <g stroke="#f2f2f2" stroke-width="2.200" stroke-linecap="round" fill="none">
    <path d="M583.500 405L626.500 446"/><path d="M619.500 390L639.500 432"/><path d="M666.500 376L662.500 420"/><path d="M716 400L685.500 431"/>
    <path d="M573 432L599.500 447"/>
   </g>
   <g stroke="#eeeeee" stroke-width="1.300" stroke-linecap="round" fill="none">
    <path d="M552 456Q572 455 588 461"/><path d="M559 464Q572 464 584 468"/><path d="M548 472Q566 472 579 477"/>
    <path d="M467 486Q496 473 530 472"/>
    <path d="M758 424.500Q774 424 781 413"/><path d="M761.500 430Q784 432 792 409.500"/>
    <path d="M678 431Q682 426 688 425"/><path d="M698 427Q712 423 726 424"/>
   </g>
   <path d="M691.1 443.8C693.3 442.3 698.8 437.1 704.1 434.9C709.4 432.8 715.8 431.0 722.6 430.8C729.4 430.7 737.2 432.4 744.9 434.2C752.6 436.0 761.6 439.7 769.0 441.6C776.4 443.5 784.1 445.4 789.4 445.7C794.6 446.0 797.6 445.1 800.5 443.4C803.4 441.7 805.8 439.1 807.0 435.5C808.2 431.8 808.6 426.1 807.9 421.6C807.2 417.1 804.0 413.2 802.7 408.6C801.5 404.0 800.3 398.3 800.5 393.8C800.7 389.2 802.3 384.8 803.8 381.2C805.4 377.5 808.1 374.1 809.8 371.9C811.4 369.7 813.2 368.5 813.9 367.8L822.0 371.5C820.7 373.1 815.8 377.7 813.9 380.8C811.9 383.9 810.2 386.3 810.1 390.1C810.1 393.8 812.0 398.4 813.5 403.0C815.0 407.7 818.2 412.9 819.0 417.9C819.8 422.8 819.8 428.1 818.3 432.7C816.8 437.3 813.4 441.7 810.1 445.7C806.9 449.7 803.0 454.6 798.7 456.8C794.3 459.0 790.0 459.6 783.8 459.0C777.6 458.5 769.0 455.5 761.6 453.5C754.2 451.4 746.7 448.2 739.3 446.8C731.9 445.3 722.8 444.4 717.1 444.7C711.4 445.1 707.8 447.2 705.0 449.0C702.2 450.9 701.2 454.7 700.4 455.9Z" fill="#f4f4f4"/>
   <g stroke="#8c8c8c" stroke-width="0.650" fill="none">
    <path d="M693.0 446.2C694.9 444.8 699.5 439.8 704.3 437.7C709.0 435.6 714.9 433.8 721.5 433.6C728.1 433.4 736.1 435.0 743.8 436.7C751.4 438.4 760.1 442.0 767.5 444.0C774.9 445.9 782.8 448.0 788.3 448.3C793.7 448.7 796.9 447.9 800.1 446.1C803.4 444.3 806.0 441.2 807.6 437.5C809.3 433.8 810.3 428.3 810.0 423.8C809.7 419.3 807.1 415.1 806.0 410.4C804.8 405.8 803.2 400.2 803.1 395.6C803.0 391.0 803.9 386.6 805.1 382.9C806.4 379.3 808.9 376.1 810.6 373.7C812.3 371.3 814.7 369.4 815.5 368.6"/>
    <path d="M694.8 448.6C696.4 447.3 700.2 442.6 704.5 440.6C708.7 438.5 714.1 436.6 720.4 436.4C726.8 436.2 735.1 437.6 742.7 439.2C750.3 440.9 758.6 444.4 766.0 446.3C773.4 448.3 781.5 450.6 787.2 451.0C792.8 451.4 796.2 450.7 799.8 448.8C803.3 446.9 806.2 443.3 808.3 439.6C810.3 435.8 811.9 430.6 812.1 426.0C812.2 421.5 810.3 417.1 809.3 412.3C808.2 407.5 806.2 402.1 805.7 397.5C805.2 392.9 805.4 388.4 806.4 384.7C807.3 381.0 809.6 378.0 811.4 375.4C813.2 372.9 816.2 370.3 817.1 369.3"/>
    <path d="M696.7 451.0C698.0 449.8 700.9 445.4 704.7 443.4C708.4 441.4 713.2 439.5 719.3 439.2C725.5 438.9 734.0 440.2 741.5 441.7C749.1 443.3 757.1 446.7 764.5 448.7C772.0 450.7 780.2 453.2 786.0 453.7C791.9 454.1 795.6 453.5 799.4 451.5C803.2 449.4 806.4 445.5 808.9 441.6C811.3 437.7 813.5 432.8 814.1 428.2C814.8 423.7 813.5 419.0 812.5 414.2C811.5 409.3 809.1 403.9 808.3 399.3C807.5 394.7 807.0 390.2 807.6 386.5C808.3 382.8 810.4 380.0 812.2 377.2C814.1 374.5 817.7 371.2 818.7 370.0"/>
    <path d="M698.5 453.5C699.6 452.2 701.6 448.1 704.8 446.2C708.1 444.3 712.3 442.3 718.2 442.0C724.1 441.6 733.0 442.7 740.4 444.3C747.9 445.8 755.6 449.1 763.1 451.1C770.5 453.1 778.9 455.8 784.9 456.4C790.9 456.9 794.9 456.2 799.0 454.1C803.1 452.0 806.6 447.6 809.5 443.6C812.4 439.7 815.2 435.1 816.2 430.5C817.3 425.9 816.7 420.9 815.8 416.0C814.9 411.1 812.0 405.8 810.9 401.2C809.7 396.6 808.5 392.0 808.9 388.3C809.2 384.6 811.1 381.9 813.0 379.0C815.0 376.1 819.2 372.1 820.4 370.8"/>
   </g>
   <g stroke="#0a0a0a" stroke-width="1.500" stroke-linecap="round" fill="none">
    <path d="M583.7 557.7C583.1 558.6 580.5 561.5 580.1 563.4C579.7 565.4 581.1 568.2 581.2 569.2"/>
    <path d="M587.3 559.1C586.8 560.0 584.8 562.6 584.4 564.2C584.1 565.7 585.0 567.8 585.1 568.5"/>
    <path d="M584.4 575.0C586.1 576.2 592.8 581.0 594.5 582.2"/>
    <path d="M604.6 577.9C606.3 578.9 613.0 583.3 614.7 584.3"/>
    <path d="M608.9 576.4C610.4 577.4 616.1 581.2 617.6 582.2"/>
    <path d="M647.9 573.5C649.3 574.4 655.1 577.7 656.5 578.6"/>
    <path d="M650.7 572.1C652.3 572.9 658.5 576.3 660.1 577.1"/>
    <path d="M676.7 565.6C677.7 566.1 681.5 568.0 682.5 568.5"/>
    <path d="M676.0 569.9C676.9 570.4 680.8 572.3 681.7 572.8"/>
   </g>
   <path d="M606.8 543.3C610.4 541.3 620.3 546.1 627.7 546.1C635.0 546.1 645.0 542.8 650.7 543.3C656.5 543.7 661.1 546.7 662.3 549.0C663.5 551.3 659.9 556.2 657.9 556.9C656.0 557.7 655.8 554.3 650.7 553.6C645.7 553.0 633.9 552.4 627.7 553.1C621.4 553.7 616.9 556.9 613.3 557.7C609.6 558.4 607.1 560.1 606.0 557.7C605.0 555.3 603.2 545.2 606.8 543.3Z" fill="#0a0a0a"/>
   <path d="M590.2 540.4C587.8 543.0 592.1 548.1 591.6 551.9C591.1 555.7 587.8 560.1 587.3 563.4C586.8 566.8 586.5 569.9 588.5 572.1C590.4 574.3 595.9 576.7 598.8 576.7C601.8 576.7 604.6 575.3 606.3 572.1C608.1 568.9 608.3 561.5 609.2 557.7C610.2 553.8 612.6 552.6 612.1 549.0C611.6 545.4 609.7 537.5 606.0 536.0C602.4 534.6 592.6 537.7 590.2 540.4Z" fill="url(#hat2)" stroke="#0c0c0c" stroke-width="1.300"/>
   <path d="M642.1 543.3C642.6 541.3 647.4 538.0 650.7 537.2C654.1 536.4 659.8 536.9 662.3 538.6C664.7 540.4 663.0 545.4 665.4 547.6C667.9 549.8 674.9 550.2 677.0 551.9C679.1 553.6 679.4 555.7 678.1 558.0C676.9 560.2 672.6 564.0 669.5 565.2C666.4 566.4 662.0 566.9 659.4 565.2C656.7 563.4 655.5 557.5 653.6 554.8C651.7 552.1 649.8 550.9 647.9 549.0C645.9 547.1 641.6 545.2 642.1 543.3Z" fill="url(#hat2)" stroke="#0c0c0c" stroke-width="1.300"/>
   <path d="M580.1 487.8C581.5 483.8 583.2 480.2 585.9 476.9C588.5 473.7 591.4 470.8 596.0 468.3C600.5 465.8 607.2 462.7 613.3 461.8C619.3 461.0 625.7 462.1 632.0 463.3C638.2 464.5 644.7 466.6 650.7 469.0C656.7 471.4 663.6 475.0 668.0 477.7C672.5 480.3 676.1 481.6 677.4 484.9C678.7 488.1 677.3 493.2 676.0 497.1C674.6 501.1 672.2 504.3 669.5 508.7C666.7 513.0 663.0 518.5 659.4 523.1C655.8 527.6 653.1 531.8 647.9 536.0C642.6 540.2 634.6 546.0 627.7 548.3C620.7 550.6 612.3 550.8 606.0 549.7C599.8 548.7 594.1 545.3 590.2 541.8C586.2 538.3 584.3 533.4 582.3 528.8C580.2 524.3 578.8 519.1 577.9 514.4C577.1 509.7 576.8 505.2 577.2 500.7C577.6 496.3 578.7 491.7 580.1 487.8Z" fill="url(#hat)" stroke="#0c0c0c" stroke-width="1.500"/>
   <path d="M613.3 527.4C617.1 525.5 624.3 528.1 630.6 526.0C636.8 523.8 646.4 515.1 650.7 514.4C655.1 513.7 657.0 518.0 656.5 521.6C656.0 525.2 652.7 531.6 647.9 536.0C643.0 540.5 633.7 546.4 627.7 548.3C621.7 550.2 615.2 549.4 611.8 547.6C608.4 545.8 607.2 540.8 607.5 537.5C607.7 534.1 609.4 529.3 613.3 527.4Z" fill="url(#hat2)"/>
   <path d="M639.2 454.6C638.2 455.7 634.9 458.7 633.4 461.1C632.0 463.5 631.5 466.3 630.6 469.0C629.6 471.8 629.1 474.5 627.7 477.7C626.2 480.8 623.6 484.6 621.9 487.8C620.2 490.9 618.3 495.0 617.6 496.4" stroke="#0c0c0c" stroke-width="3.600" fill="none" stroke-linecap="round"/>
   <path d="M639.2 454.6C638.2 455.7 634.9 458.7 633.4 461.1C632.0 463.5 631.5 466.3 630.6 469.0C629.6 471.8 629.1 474.5 627.7 477.7C626.2 480.8 623.6 484.6 621.9 487.8C620.2 490.9 618.3 495.0 617.6 496.4" stroke="#f4f4f4" stroke-width="1.500" fill="none" stroke-linecap="round"/>
   <path d="M613.3 521.6C612.1 523.2 608.7 528.6 606.0 531.0C603.4 533.4 599.8 534.2 597.4 536.0C595.0 537.8 592.6 540.8 591.6 541.8" stroke="#0c0c0c" stroke-width="3.600" fill="none" stroke-linecap="round"/>
   <path d="M613.3 521.6C612.1 523.2 608.7 528.6 606.0 531.0C603.4 533.4 599.8 534.2 597.4 536.0C595.0 537.8 592.6 540.8 591.6 541.8" stroke="#f4f4f4" stroke-width="1.500" fill="none" stroke-linecap="round"/>
   <path d="M624.8 479.1C624.3 477.2 629.8 475.5 632.0 473.3C634.2 471.2 636.3 468.8 637.8 466.1C639.2 463.5 639.9 460.4 640.6 457.5C641.4 454.6 641.4 451.2 642.1 448.8C642.8 446.4 644.0 444.8 645.0 443.1C645.9 441.3 645.9 440.1 647.9 438.5C649.8 436.8 653.1 434.3 656.5 433.3C659.9 432.2 664.7 431.8 668.0 432.3C671.4 432.7 674.9 434.3 676.7 435.9C678.5 437.4 678.9 439.8 679.0 441.6C679.0 443.5 678.3 445.3 677.0 446.8C675.6 448.4 671.9 449.2 670.9 451.0C669.9 452.8 671.2 455.2 670.9 457.5C670.7 459.8 670.8 462.3 669.5 464.7C668.2 467.1 664.0 469.7 663.0 471.9C662.0 474.1 662.9 475.7 663.7 477.7C664.6 479.6 670.2 481.8 668.0 483.4C665.9 485.1 656.3 487.5 650.7 487.8C645.2 488.0 639.2 486.3 634.9 484.9C630.6 483.4 625.3 481.0 624.8 479.1Z" fill="url(#hat3)" stroke="#0c0c0c" stroke-width="1.300"/>
   <path d="M660.5 449.6C661.8 448.5 666.7 447.1 669.5 446.7C672.2 446.3 676.3 446.4 677.0 447.1C677.7 447.8 675.5 449.9 673.8 451.0C672.1 452.1 668.6 453.1 666.6 453.4C664.6 453.8 662.7 453.5 661.7 452.9C660.7 452.2 659.2 450.6 660.5 449.6Z" fill="#111"/>
   <path d="M663.7 452.0C664.2 451.5 669.3 450.5 670.9 450.3C672.5 450.1 673.7 450.4 673.2 450.9C672.7 451.3 669.6 453.0 668.0 453.2C666.5 453.4 663.2 452.5 663.7 452.0Z" fill="#f4f4f4"/>
   <circle cx="652.9" cy="437.3" r="1.500" fill="#111"/>
   <path d="M593.8 458.6C594.1 457.0 595.4 456.8 596.2 456.0C597.1 455.3 597.9 454.1 598.8 454.0C599.8 453.9 601.0 455.8 602.0 455.5C603.0 455.1 603.6 452.0 604.6 452.0C605.6 452.0 606.6 454.8 607.8 455.5C609.0 456.1 610.6 455.7 611.8 456.0C613.0 456.4 614.3 455.9 615.0 457.8C615.7 459.7 615.5 464.3 616.1 467.6C616.8 470.9 617.6 474.8 619.0 477.7C620.5 480.6 623.5 482.5 624.8 484.9C626.0 487.3 627.5 490.4 626.5 492.1C625.6 493.8 621.2 494.8 619.0 495.3C616.8 495.7 615.2 496.2 613.3 495.0C611.3 493.7 609.9 491.1 607.5 487.8C605.1 484.4 601.0 478.4 598.8 474.8C596.7 471.2 595.4 468.8 594.5 466.1C593.7 463.4 593.5 460.3 593.8 458.6Z" fill="url(#hat2)" stroke="#0c0c0c" stroke-width="1.300"/>
   <path d="M684.2 448.8C684.9 446.9 684.5 446.3 685.3 446.0C686.2 445.6 687.9 447.1 689.1 446.8C690.3 446.6 691.4 444.4 692.5 444.5C693.7 444.6 694.5 446.9 695.7 447.4C696.9 447.9 698.6 446.7 699.8 447.7C700.9 448.7 702.6 451.8 702.6 453.4C702.6 455.1 701.4 455.7 699.8 457.8C698.1 459.9 695.0 463.5 692.5 466.1C690.1 468.7 687.5 470.9 685.3 473.3C683.2 475.7 682.0 478.8 679.6 480.6C677.2 482.3 673.6 484.2 670.9 483.7C668.3 483.2 664.0 479.4 663.7 477.7C663.5 475.9 667.3 475.0 669.5 473.3C671.6 471.7 674.8 470.2 676.7 467.6C678.6 465.0 679.8 460.9 681.0 457.8C682.3 454.7 683.5 450.8 684.2 448.8Z" fill="url(#hat2)" stroke="#0c0c0c" stroke-width="1.300"/>
   <path d="M452.9 499.6C455.2 497.9 460.0 492.7 466.8 489.7C473.6 486.7 484.6 483.2 493.5 481.7C502.5 480.1 511.4 479.7 520.3 480.3C529.2 481.0 537.3 482.8 547.1 485.7C556.9 488.6 568.5 494.8 579.2 497.7C589.9 500.6 600.6 502.4 611.4 503.1C622.1 503.7 634.1 503.5 643.5 501.7C652.9 500.0 662.0 495.3 667.6 492.4C673.2 489.4 675.6 485.5 677.2 484.1L676.1 499.6C673.8 502.2 667.7 511.4 662.2 515.1C656.8 518.8 652.0 520.8 643.5 521.8C635.0 522.8 623.0 522.6 611.4 521.0C599.8 519.5 584.6 515.4 573.9 512.4C563.2 509.5 556.0 505.5 547.1 503.1C538.2 500.7 529.2 498.4 520.3 498.0C511.4 497.6 502.5 498.7 493.5 500.7C484.6 502.6 473.7 506.5 466.8 509.8C459.9 513.1 454.5 518.7 452.0 520.5Z" fill="#f6f6f6" stroke="#1a1a1a" stroke-width="0.700"/>
   <g stroke="#8c8c8c" stroke-width="0.650" fill="none">
    <path d="M452.7 503.8C455.0 502.1 460.0 496.8 466.8 493.7C473.6 490.7 484.6 487.1 493.5 485.5C502.5 483.8 511.4 483.2 520.3 483.9C529.2 484.5 542.6 488.3 547.1 489.2"/>
    <path d="M452.5 508.0C454.9 506.2 459.9 500.8 466.8 497.7C473.6 494.6 484.6 491.0 493.5 489.3C502.5 487.5 511.4 486.8 520.3 487.4C529.2 488.0 542.6 491.8 547.1 492.6"/>
    <path d="M452.4 512.1C454.8 510.4 459.9 504.9 466.8 501.7C473.6 498.6 484.6 494.9 493.5 493.1C502.5 491.3 511.4 490.4 520.3 490.9C529.2 491.4 542.6 495.3 547.1 496.1"/>
    <path d="M452.2 516.3C454.6 514.5 459.9 509.0 466.8 505.8C473.7 502.5 484.6 498.8 493.5 496.9C502.5 495.0 511.4 494.0 520.3 494.5C529.2 494.9 542.6 498.7 547.1 499.6"/>
   </g>
   <text x="0" y="0" transform="translate(557.500 505) rotate(10.500) skewX(-22) scale(1.320 1)" font-family="Liberation Sans, sans-serif" font-weight="700" font-size="18.500" letter-spacing="1.600" fill="#111">FINISH</text>
   <path d="M927 351.500Q920 346 911 347Q886 350 885 372Q886 394 900 396L917 397Q912 418 895 433L897 437Q915 428 927.500 414" fill="none" stroke="#ead89e" stroke-width="1.300"/>
  </svg>
  <div class="sub" id="s1" style="left:481.5px;top:713px;font-size:29px;line-height:36px;letter-spacing:.35px">一个引人注目的投资悖论</div>
  <div class="sub a" style="left:423px;letter-spacing:2.5px">[荷]</div>
  <div class="sub a" style="left:451px">平<i>·</i>范<i>·</i>弗利特</div>
  <div class="sub a lat" style="left:530.5px">(Pim van Vliet)</div>
  <div class="sub a" style="left:616.5px;letter-spacing:2.5px">[荷]</div>
  <div class="sub a" style="left:643.5px">杨<i>·</i>德<i>·</i>科宁</div>
  <div class="sub a lat" style="left:712px">(Jan de Koning)</div>
  <div class="sub a" style="left:787px">◎著</div>
  <div class="sub a" style="left:822px">夏春◎译</div>
  <div class="sans" id="s3" style="left:485px;top:784px;font-size:12.7px;line-height:17px;letter-spacing:-.47px">股市中的龟兔赛跑：以低风险量化策略收获高收益投资回报</div>
  <div class="sans" id="s4" style="left:613.5px;top:870px;font-size:10.3px;line-height:14px;letter-spacing:.3px">中信出版集团</div>
<!--FAB-->
  <div class="abs" style="left:316px;top:90px;width:9px;height:809px;background:linear-gradient(90deg,#e8e8e8,#cbcbcb)"></div>
  <div class="abs" style="left:316px;top:90px;width:655px;height:6px;background:linear-gradient(180deg,rgba(238,238,238,1),rgba(238,238,238,0))"></div>
  <div class="abs" style="left:967.5px;top:90px;width:4px;height:809px;background:#e4e4e4"></div>
  <div class="abs" style="left:968.5px;top:114px;width:8px;height:27px;border:1px solid #b0b0b0;border-radius:4px;background:#fff"></div>
  <svg class="abs" style="left:933px;top:100px" width="32" height="32" viewBox="0 0 32 32"><circle cx="16" cy="16" r="15" fill="#4285f0" stroke="#fff" stroke-width="1.600"/><rect x="11" y="10" width="10.200" height="7.300" fill="#fff"/><rect x="14.800" y="13.600" width="8.300" height="8.500" fill="#4285f0" stroke="#fff" stroke-width="1"/><path d="M16.500 15.500L17.800 20L19 17.500L20.200 20L21.500 15.500" stroke="#fff" stroke-width="0.900" fill="none"/><path d="M8.700 17.300V21H13M11.500 19.300L13.200 21L11.500 22.700" stroke="#fff" stroke-width="1" fill="none"/></svg>
 </div>
</div>
</div>
</body>
</html>
